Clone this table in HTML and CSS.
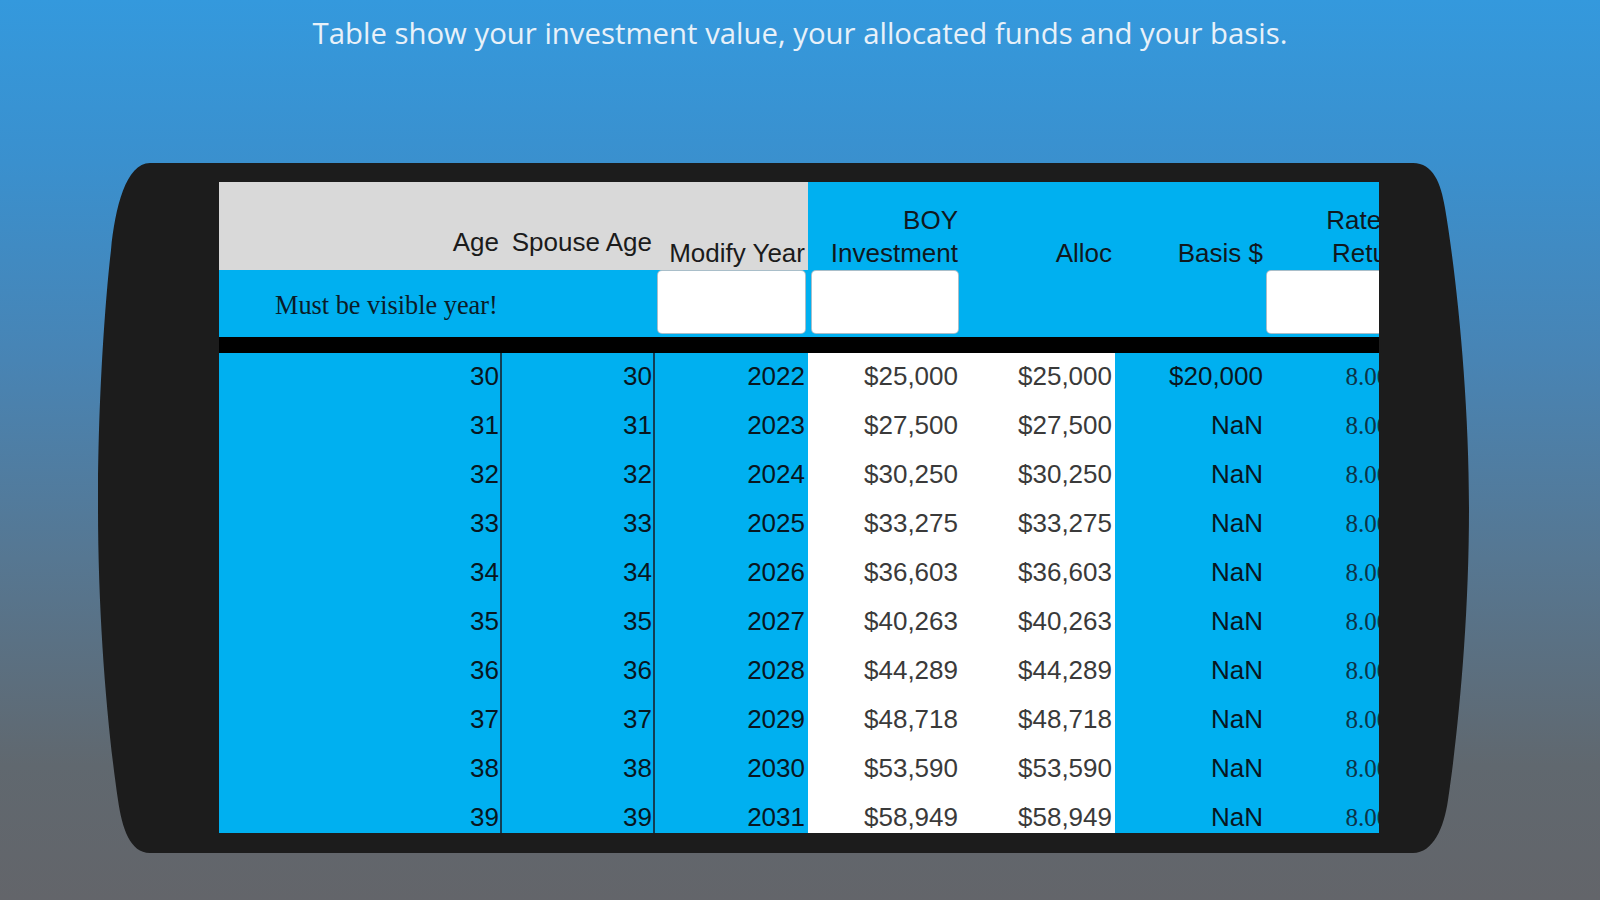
FILE: index.html
```html
<!DOCTYPE html>
<html lang="en">
<head>
<meta charset="utf-8">
<title>Investment table</title>
<link rel="stylesheet" href="styles.css">
</head>
<body>
<div class="page">
  <p class="caption">Table show your investment value, your allocated funds and your basis.</p>
  <div class="phone">
    <div class="screen">
      <div class="row head">
        <div class="cell gray low">Age</div>
        <div class="cell gray low">Spouse Age</div>
        <div class="cell gray">Modify Year</div>
        <div class="cell">BOY<br>Investment</div>
        <div class="cell">Alloc</div>
        <div class="cell">Basis $</div>
        <div class="cell">Rate of<br>Return</div>
      </div>
      <div class="row inputs">
        <div class="note">Must be visible year!</div>
        <div class="slot"><div class="field f-year"></div></div>
        <div class="slot"><div class="field f-boy"></div></div>
        <div class="slot"></div>
        <div class="slot"></div>
        <div class="slot"><div class="field f-rate"></div></div>
      </div>
      <div class="divider"></div>
      <div class="body">
        <div class="row data"><div class="c sep">30</div><div class="c sep">30</div><div class="c">2022</div><div class="c w">$25,000</div><div class="c w">$25,000</div><div class="c">$20,000</div><div class="c rate">8.00%</div></div>
        <div class="row data"><div class="c sep">31</div><div class="c sep">31</div><div class="c">2023</div><div class="c w">$27,500</div><div class="c w">$27,500</div><div class="c">NaN</div><div class="c rate">8.00%</div></div>
        <div class="row data"><div class="c sep">32</div><div class="c sep">32</div><div class="c">2024</div><div class="c w">$30,250</div><div class="c w">$30,250</div><div class="c">NaN</div><div class="c rate">8.00%</div></div>
        <div class="row data"><div class="c sep">33</div><div class="c sep">33</div><div class="c">2025</div><div class="c w">$33,275</div><div class="c w">$33,275</div><div class="c">NaN</div><div class="c rate">8.00%</div></div>
        <div class="row data"><div class="c sep">34</div><div class="c sep">34</div><div class="c">2026</div><div class="c w">$36,603</div><div class="c w">$36,603</div><div class="c">NaN</div><div class="c rate">8.00%</div></div>
        <div class="row data"><div class="c sep">35</div><div class="c sep">35</div><div class="c">2027</div><div class="c w">$40,263</div><div class="c w">$40,263</div><div class="c">NaN</div><div class="c rate">8.00%</div></div>
        <div class="row data"><div class="c sep">36</div><div class="c sep">36</div><div class="c">2028</div><div class="c w">$44,289</div><div class="c w">$44,289</div><div class="c">NaN</div><div class="c rate">8.00%</div></div>
        <div class="row data"><div class="c sep">37</div><div class="c sep">37</div><div class="c">2029</div><div class="c w">$48,718</div><div class="c w">$48,718</div><div class="c">NaN</div><div class="c rate">8.00%</div></div>
        <div class="row data"><div class="c sep">38</div><div class="c sep">38</div><div class="c">2030</div><div class="c w">$53,590</div><div class="c w">$53,590</div><div class="c">NaN</div><div class="c rate">8.00%</div></div>
        <div class="row data"><div class="c sep">39</div><div class="c sep">39</div><div class="c">2031</div><div class="c w">$58,949</div><div class="c w">$58,949</div><div class="c">NaN</div><div class="c rate">8.00%</div></div>
      </div>
    </div>
  </div>
</div>
</body>
</html>
```

FILE: styles.css
```css
* { box-sizing: border-box; }

html, body {
  margin: 0;
  padding: 0;
}

.page {
  width: 1600px;
  height: 900px;
  overflow: hidden;
  background: linear-gradient(180deg, #3499dd 0%, #3a90ce 18%, #4884b4 40%, #567792 62%, #60686f 85%, #63656a 100%);
  display: flex;
  flex-direction: column;
}

.caption {
  margin: 0;
  padding-top: 13px;
  font-family: "Open Sans", sans-serif;
  font-size: 29.35px;
  line-height: 40px;
  color: #e8f1f9;
  text-align: center;
}

.phone {
  margin: 110px 0 0 98px;
  width: 1372px;
  height: 690px;
  background: #1c1c1c;
  clip-path: path('M52,0 L1315,0 C1335,0 1343,20 1347,45 C1358,110 1371,230 1371,345 C1371,460 1360,570 1350,637 C1346,665 1335,690 1315,690 L52,690 C32,690 24,665 20,637 C10,570 0,460 0,345 C0,230 8,130 13,87 C17,45 28,0 52,0 Z');
  padding: 19px 91px 20px 121px;
}

.screen {
  width: 1160px;
  height: 651px;
  overflow: hidden;
  background: #00b0f0;
  font-family: "Liberation Sans", Arial, sans-serif;
  font-size: 26px;
  color: #0b1a24;
}

.row {
  display: grid;
  grid-template-columns: 283px 153px 153px 153px 154px 151px 147px;
  width: 1194px;
}

.head {
  height: 86px;
  background: #00b0f0;
}

.cell {
  display: flex;
  flex-direction: column;
  justify-content: flex-end;
  align-items: flex-end;
  text-align: right;
  line-height: 33px;
  padding-right: 3px;
  margin-bottom: -2px;
  color: #10181e;
}

.cell.gray {
  background: #d9d9d9;
  color: #1b1b1b;
}

.cell.low {
  padding-bottom: 11px;
}

.inputs {
  height: 69px;
  position: relative;
}

.note {
  grid-column: 1 / span 2;
  font-family: "Liberation Serif", "Times New Roman", serif;
  font-size: 26.3px;
  line-height: 63px;
  padding-top: 6px;
  padding-left: 56px;
  color: #0a1c28;
}

.slot {
  padding: 2px 2px 3px 2px;
}

.field {
  height: 100%;
  background: #ffffff;
  border-radius: 5px;
  border: 1px solid rgba(8, 70, 100, 0.35);
}

.f-boy {
  margin-left: 1px;
}

.f-rate {
  margin-left: -2px;
  border-radius: 5px 0 0 5px;
}

.divider {
  height: 16px;
  background: #000000;
}

.data {
  height: 49px;
}

.c {
  line-height: 47px;
  text-align: right;
  padding-right: 3px;
  color: #08161f;
}

.c.sep {
  border-right: 2px solid #123e55;
  padding-right: 1px;
}

.c.w {
  background: #ffffff;
  color: #3a3a3a;
}

.c.rate {
  font-family: "Liberation Serif", "Times New Roman", serif;
  font-size: 25px;
  color: #0c3448;
}
```
